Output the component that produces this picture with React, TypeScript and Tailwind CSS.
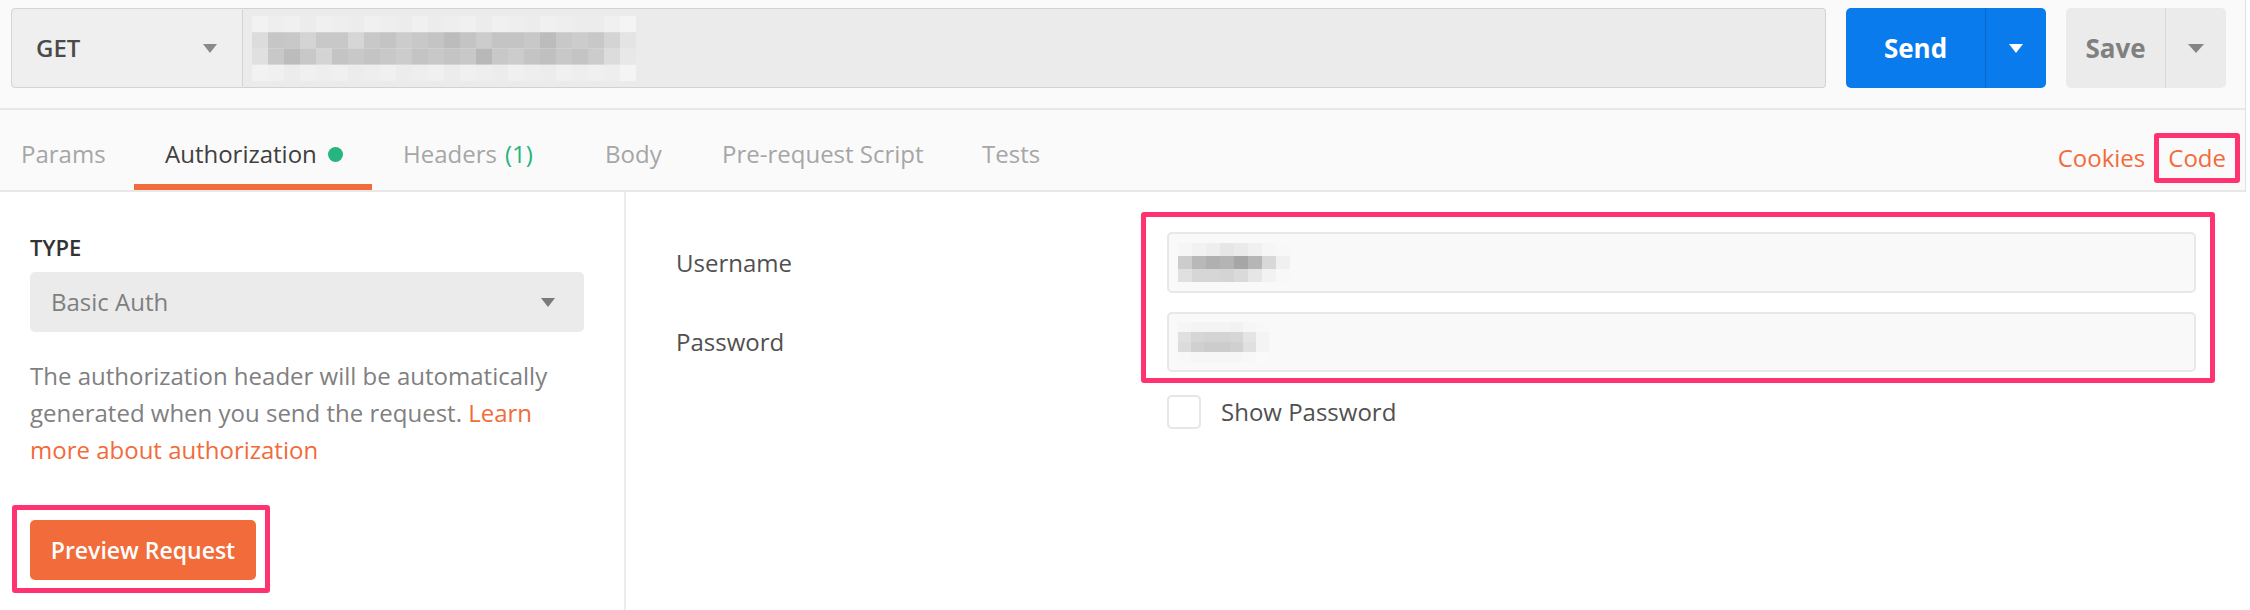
import React from "react";

const urlRows: string[][] = [
  ["f2","ee","f0","ec","f0","ee","ec","f0","ee","ec","f0","ec","ee","f0","ec","f0","ee","ec","f0","ee","ec","ec","f0","f4"],
  ["dc","c6","c8","d4","c8","c8","d6","c8","c4","cc","c8","c4","bc","c4","cc","c4","c4","c8","bc","c8","cc","c8","d4","e4"],
  ["e0","c8","bc","c8","d4","c4","c8","c4","c8","cc","c4","c8","c4","c8","b8","c8","cc","c4","c0","c8","c4","cc","dc","e8"],
  ["f2","f0","ec","f0","ee","f0","ec","ee","f0","ec","ee","f0","ec","f0","ee","ec","f0","ee","ec","f0","ee","f0","ee","f4"],
];

const userRows: string[][] = [
  ["f6","f2","ee","e6","ea","f0","f6","f8"],
  ["cc","b8","b0","b4","a6","b6","d8","f0"],
  ["e0","d6","d6","d4","da","e6","f2","f8"],
];

const passRows: string[][] = [
  ["f6","f4","f4","f4","f2","f6","f8"],
  ["e0","d6","d4","d4","d6","e4","f4"],
  ["dc","d0","cc","cc","d0","e0","f4"],
  ["f8","f6","f6","f6","f6","f8","fa"],
];

function Mosaic({ rows, cw, rh }: { rows: string[][]; cw: number; rh: number }) {
  const w = rows[0].length * cw;
  const h = rows.length * rh;
  return (
    <svg width={w} height={h} className="block">
      {rows.map((r, y) =>
        r.map((c, x) => (
          <rect key={`${x}-${y}`} x={x * cw} y={y * rh} width={cw} height={rh} fill={`#${c}${c}${c}`} />
        ))
      )}
    </svg>
  );
}

function Caret({ color, w = 14, h = 9 }: { color: string; w?: number; h?: number }) {
  return (
    <svg width={w} height={h} viewBox={`0 0 ${w} ${h}`} className="block">
      <polygon points={`0,0 ${w},0 ${w / 2},${h}`} fill={color} />
    </svg>
  );
}

export default function App() {
  return (
    <div className="w-[2250px] h-[610px] overflow-hidden bg-white font-['Open_Sans',sans-serif] flex flex-col">
      {/* Header area */}
      <div className="w-[2246px] bg-[#fafafa] border-r border-[#e2e2e2] flex flex-col">
        <div className="h-[108px] flex items-start pt-[8px] pl-[11px] pr-[19px]">
          {/* method + url */}
          <div className="flex-1 flex h-[80px]">
            <div className="w-[232px] h-full flex items-center justify-between pl-[24px] pr-[25px] bg-[#efefef] border border-[#d4d4d4] rounded-l-[4px]">
              <span className="text-[24px] font-semibold text-[#4a4a4a] leading-none">GET</span>
              <Caret color="#8a8a8a" />
            </div>
            <div className="flex-1 h-full flex items-center pl-[9px] bg-[#ebebeb] border-y border-r border-[#d2d2d2] rounded-r-[4px]">
              <Mosaic rows={urlRows} cw={16} rh={16.25} />
            </div>
          </div>
          {/* Send */}
          <div className="ml-[20px] w-[200px] h-[80px] flex bg-[#097bed] rounded-[5px] overflow-hidden">
            <div className="w-[139px] flex items-center justify-center text-white text-[26px] font-bold">Send</div>
            <div className="w-[1px] bg-[#0868cc]" />
            <div className="flex-1 flex items-center justify-center">
              <Caret color="#ffffff" />
            </div>
          </div>
          {/* Save */}
          <div className="ml-[20px] w-[160px] h-[80px] flex bg-[#ebebeb] rounded-[5px] overflow-hidden">
            <div className="w-[99px] flex items-center justify-center text-[#808080] text-[26px] font-bold">Save</div>
            <div className="w-[1px] bg-[#d8d8d8]" />
            <div className="flex-1 flex items-center justify-center">
              <Caret color="#858585" w={16} h={9} />
            </div>
          </div>
        </div>
        <div className="h-[2px] bg-[#e8e8e8]" />
        {/* Tabs */}
        <div className="h-[80px] flex items-stretch text-[24px] leading-[32px]">
          <div className="w-[134px] pl-[21px] pt-[14px] border-b-[6px] border-transparent flex items-center text-[#a6a6a6]">Params</div>
          <div className="w-[238px] pl-[31px] pt-[14px] border-b-[6px] border-[#f26b3a] flex items-center text-[#404040]">
            Authorization
            <span className="ml-[11px] w-[15px] h-[15px] rounded-full bg-[#26b47f] inline-block" />
          </div>
          <div className="w-[203px] pl-[31px] pt-[14px] border-b-[6px] border-transparent flex items-center text-[#a6a6a6]">
            Headers<span className="ml-[8px] text-[#26b47f]">(1)</span>
          </div>
          <div className="w-[117px] pl-[30px] pt-[14px] border-b-[6px] border-transparent flex items-center text-[#a6a6a6]">Body</div>
          <div className="w-[260px] pl-[30px] pt-[14px] border-b-[6px] border-transparent flex items-center text-[#a6a6a6]">Pre-request Script</div>
          <div className="pl-[30px] pt-[14px] border-b-[6px] border-transparent flex items-center text-[#a6a6a6]">Tests</div>
          <div className="ml-auto flex items-center pt-[15px] pr-[5px]">
            <span className="text-[#f26b3a]">Cookies</span>
            <span className="ml-[9px] h-[50px] flex items-center px-[9px] border-[5px] border-[#ff3370] rounded-[3px] text-[#f26b3a]">Code</span>
          </div>
        </div>
        <div className="h-[2px] bg-[#e8e8e8]" />
      </div>

      {/* Content */}
      <div className="flex flex-1">
        {/* Left panel */}
        <div className="w-[626px] border-r-2 border-[#ececec] pl-[30px] pt-[40px]">
          <div className="text-[22px] leading-[30px] font-semibold text-[#333333]">TYPE</div>
          <div className="mt-[10px] w-[554px] h-[60px] bg-[#ebebeb] rounded-[5px] flex items-center justify-between pl-[21px] pr-[29px]">
            <span className="text-[24px] text-[#7f7f7f]">Basic Auth</span>
            <Caret color="#7a7a7a" />
          </div>
          <div className="mt-[25px] w-[560px] text-[24px] leading-[37px] text-[#808080]">
            <div>The authorization header will be automatically</div>
            <div>
              generated when you send the request. <span className="text-[#f26b3a]">Learn</span>
            </div>
            <div className="text-[#f26b3a]">more about authorization</div>
          </div>
          <div className="mt-[52px] relative w-[226px]">
            <div className="h-[60px] bg-[#f26b3a] rounded-[5px] flex items-center justify-center text-white text-[23px] font-semibold">
              Preview Request
            </div>
            <div className="absolute -left-[18px] -top-[15px] -right-[14px] -bottom-[13px] border-[5px] border-[#ff3370] rounded-[3px]" />
          </div>
        </div>

        {/* Right panel */}
        <div className="flex-1 pl-[50px] pr-[54px] pt-[40px]">
          <div className="flex">
            <div className="w-[491px] flex flex-col text-[24px] text-[#505050]">
              <div className="h-[61px] flex items-center">Username</div>
              <div className="h-[60px] mt-[19px] flex items-center">Password</div>
            </div>
            <div className="flex-1 flex flex-col">
              <div className="relative">
                <div className="h-[61px] bg-[#f9f9f9] border-2 border-[#e8e8e8] rounded-[5px] flex items-center pl-[9px]">
                  <Mosaic rows={userRows} cw={14} rh={13} />
                </div>
                <div className="mt-[19px] h-[60px] bg-[#f9f9f9] border-2 border-[#e8e8e8] rounded-[5px] flex items-center pl-[9px]">
                  <Mosaic rows={passRows} cw={13} rh={10} />
                </div>
                <div className="absolute -left-[26px] -top-[20px] -right-[19px] -bottom-[11px] border-[5px] border-[#ff3370] rounded-[3px]" />
              </div>
              <div className="mt-[22px] flex items-center">
                <div className="w-[34px] h-[34px] border-2 border-[#e6e6e6] rounded-[5px] bg-white" />
                <span className="ml-[20px] text-[24px] text-[#505050]">Show Password</span>
              </div>
            </div>
          </div>
        </div>
      </div>
    </div>
  );
}
